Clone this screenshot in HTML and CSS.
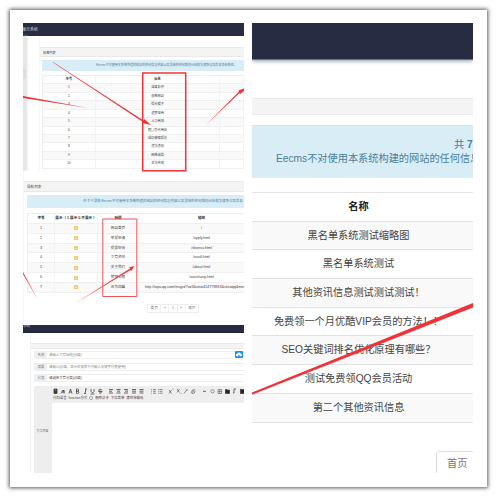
FILE: index.html
```
<!DOCTYPE html>
<html lang="en">
<head>
<meta charset="utf-8">
<title>Eecms</title>
<link rel="stylesheet" href="styles.css">
</head>
<body>
<main class="card">
  <div class="left">
    <section class="shot tags">
      <header class="nav">曝光系统</header>
      <div class="tags-body">
        <aside class="side"><i></i></aside>
        <div class="panel">
          <div class="bar">标签列表</div>
          <div class="alert">Eecms不对使用本系统构建的网站的任何信息内容以及导致的任何版权纠纷和法律争议及后果承担责任。</div>
          <div class="grid">
            <div class="row head"><span>序号</span><span>标签</span><span></span></div>
            <div class="row odd"><span>1</span><span>自媒易评</span><span></span></div>
            <div class="row"><span>2</span><span>收款网站</span><span></span></div>
            <div class="row odd"><span>3</span><span>曝光骗子</span><span></span></div>
            <div class="row"><span>4</span><span>追梦电商</span><span></span></div>
            <div class="row odd"><span>5</span><span>人马商城</span><span></span></div>
            <div class="row"><span>6</span><span>假冒伪劣商品</span><span></span></div>
            <div class="row odd"><span>7</span><span>成功被骗曝光</span><span></span></div>
            <div class="row"><span>8</span><span>违法违规</span><span></span></div>
            <div class="row odd"><span>9</span><span>网络诚信</span><span></span></div>
            <div class="row"><span>10</span><span>非法传销</span><span></span></div>
          </div>
        </div>
      </div>
    </section>
    <section class="shot links">
      <div class="bar">导航列表</div>
      <div class="alert">共 <b>7</b> 个导航 Eecms不对使用本系统构建的网站的任何信息内容以及导致的任何版权纠纷和法律争议及后果</div>
      <div class="grid">
        <div class="row head"><span>序号</span><span>展示（ 1.展示 0.不展示 ）</span><span>标题</span><span>链接</span></div>
        <div class="row odd"><span>1</span><span><i>是</i></span><span>网站首页</span><span>/</span></div>
        <div class="row"><span>2</span><span><i>是</i></span><span>举报申请</span><span>/apply.html</span></div>
        <div class="row odd"><span>3</span><span><i>是</i></span><span>提报申诉</span><span>/shensu.html</span></div>
        <div class="row"><span>4</span><span><i>是</i></span><span>文章资讯</span><span>/wzall.html</span></div>
        <div class="row odd"><span>5</span><span><i>是</i></span><span>关于我们</span><span>/about.html</span></div>
        <div class="row"><span>6</span><span><i>是</i></span><span>赞赏上榜</span><span>/zanshang.html</span></div>
        <div class="row odd"><span>7</span><span><i>是</i></span><span>合作加盟</span><span class="url">http://wpa.qq.com/msgrd?v=3&amp;uin=414779833&amp;site=qq&amp;men</span></div>
      </div>
      <div class="pager"><span class="wide">首页</span><span>«</span><span>1</span><span>»</span><span class="wide">尾页</span></div>
    </section>
    <section class="shot editor">
      <header class="nav">系统</header>
      <div class="form">
        <div class="bar"></div>
        <div class="field"><label>名称</label><span>请输入文章标题[必填]</span>
          <svg class="cloud" viewBox="0 0 16 14"><rect width="16" height="14" rx="2" fill="#1890ff"/><path d="M4 10.500a2.200 2.200 0 0 1 0-4.400 4 4 0 0 1 7.500-1A2.800 2.800 0 0 1 12 10.500H9.300V8H6.700v2.500z" fill="#fff"/></svg>
        </div>
        <div class="field"><label>摘要</label><span>请输入[必填，显示在搜索中可输入关键字代替使用]</span></div>
        <div class="field"><label>分类</label><span class="dark">请选择文章分类[必填]</span></div>
        <div class="rich">
          <label>文章内容</label>
          <div class="area">
            <div class="tools">
              <svg viewBox="0 0 192 9" class="icons" fill="none" stroke="#444" stroke-width=".8">
                <path d="M2 2h3v4.500H2zM3 2v2h1V2" fill="#333"/>
                <path d="M9 5h4M10 3.500h2v3M9 6.500l3-3"/>
                <path d="M17 6.500l1.500-4.500 1.500 4.500M17.500 5h2M24.500 2v4.500h1.200a1 1 0 0 0 0-2.200h-1.200 1a1 1 0 0 0 0-2.300z"/>
                <path d="M33 2h2M34 2l-1 4.500M32 6.500h2M39 2v2.500q1.500 3 3 0V2M38.500 7h4M49.500 2.500q-3-1-2.500 1t2.500 1q0 2.500-2.500 1.500M46 4.300h4.500"/>
                <path d="M57 2.500h4M57 4.200h3M57 6h4M64.500 2.500h4M65 4.200h3M64.500 6h4M72 2.500h4M73 4.200h3M72 6h4M80 2.500h4M80 4.200h4M80 6h4M87.500 2.500h4M87.500 4.200h4M87.500 6h4"/>
                <path d="M99 2.500h.8M101 2.500h3M99 4.300h.8M101 4.300h3M99 6.200h.8M101 6.200h3M106 2.500h.8M107.500 2.500h3M106 4.300h.8M107.500 4.300h3M106 6.200h.8M107.500 6.200h3" stroke-width=".6"/>
                <path d="M117 3l2.500 3.500M119.500 3 117 6.500M120.500 2h1M125 2l2.500 3.500M127.500 2 125 5.500M128.500 6.500h1M132 6.500l3.500-4.500M134 2.500l1 1M139 6.500l4-4M139.500 5.500q0-3 3-3M143 4q0 3-3 2.500" stroke-width=".6"/>
                <path d="M151 4.300h3"/><circle cx="160.500" cy="4.300" r="1.700" stroke-width=".5"/><path d="M166 2.500h3.500v4H166zM166 4.500h3.500M167.700 2.500v4" stroke-width=".5"/><path d="M173.500 2.500h1.500l.5.600h2v3.400h-4z" fill="#222"/><path d="M182 2h2M182 2v4h-1"/><rect x="188.500" y="2.500" width="3.500" height="4" fill="#222"/>
              </svg>
              <div class="words"><span>代码语言</span><span>function方式</span><svg class="ring" viewBox="0 0 4 4"><circle cx="2" cy="2" r="1.600" fill="none" stroke="#666" stroke-width=".5"/></svg><span>删除命令</span><span>下拉菜单</span><span>清空草稿纸</span></div>
            </div>
          </div>
        </div>
      </div>
    </section>
  </div>
  <section class="shot right">
    <header class="nav"></header>
    <div class="bar"></div>
    <div class="alert"><div class="count">共 <b>7</b></div><div class="notice">Eecms不对使用本系统构建的网站的任何信息</div></div>
    <div class="list">
      <div class="item head">名称</div>
      <div class="item odd">黑名单系统测试缩略图</div>
      <div class="item">黑名单系统测试</div>
      <div class="item odd">其他资讯信息测试测试测试！</div>
      <div class="item">免费领一个月优酷VIP会员的方法！！</div>
      <div class="item odd">SEO关键词排名优化原理有哪些？</div>
      <div class="item">测试免费领QQ会员活动</div>
      <div class="item odd">第二个其他资讯信息</div>
    </div>
    <div class="first">首页</div>
  </section>
</main>
<svg class="marks" viewBox="0 0 497 497" fill="#ee3438">
  <path d="M142.700 73h43v97.700h-43z" fill="none" stroke="#ee3438" stroke-width="1.500"/>
  <path d="M53 62 143.500 120.500l.8-1.500 6.700 6-8.500-2 .5-1L53 62.500z"/>
  <path d="M23 96 88 108 23 98z"/>
  <path d="M206 125l33-33.500-.5-1L244 88.500v2.500l-4 3-.5-1z"/>
  <path d="M102.800 219h34v77.500h-34z" fill="none" stroke="#ee5558" stroke-width="1"/>
  <path d="M75 303.500l55-35-.8-1.300L134.500 266l-3.300 5-.7-1z"/>
  <path d="M23 272l15 28-15-26z"/>
  <path d="M252 392.500 473 303v4.500L252 394.700z"/>
</svg>
</body>
</html>
```
FILE: styles.css
```
* { box-sizing: border-box; }
body {
  margin: 0;
  width: 497px;
  height: 497px;
  overflow: hidden;
  padding: 10px;
  background: #fff;
  color: #444;
  font-family: "Liberation Sans", "Noto Sans CJK SC", sans-serif;
}
.card {
  width: 477px;
  height: 477px;
  padding: 13px;
  display: flex;
  gap: 8px;
  background: #fff;
  box-shadow: 0 0 4px 1px rgba(0, 0, 0, .65);
}
.left { width: 221px; display: flex; flex-direction: column; }
.shot { width: 221px; overflow: hidden; white-space: nowrap; flex: none; }
.nav { background: #272c42; color: #c4c6ce; }
.bar { background: #f4f4f4; border: 0 solid #e9e9e9; border-width: .5px 0; }
.alert { background: #d9edf7; color: #4b8097; text-align: center; }
.row { display: grid; text-align: center; border-bottom: 1px solid #f0f0f0; }
.row span { min-width: 0; border-right: 1px solid #f3f3f3; }
.odd { background: #f9f9f9; }
.head { font-weight: bold; color: #333; }

.tags { height: 148px; font-size: 3.2px; }
.tags .nav { height: 13px; font-size: 4px; line-height: 13px; text-indent: -1px; }
.tags-body { display: flex; }
.side { width: 3px; height: 135px; background: #e6e6e6; margin-right: 13px; padding-top: 33px; box-shadow: 1px 0 3px #ddd; }
.side i { display: block; height: 10px; background: #dcdcdc; }
.panel { width: 205px; padding-top: 11px; border-left: 1px solid #f7f7f7; }
.tags .bar { height: 10px; line-height: 10px; padding-left: 3px; }
.tags .alert { height: 11px; line-height: 11px; margin: 3px 0 4px 2px; font-size: 3.05px; padding-left: 47px; }
.tags .grid { margin-left: 2px; border-left: 1px solid #eee; border-top: 1px solid #eee; }
.tags .row { grid-template-columns: 53px 124px 24px; height: 8.43px; line-height: 7.6px; }

.links { height: 154px; padding-top: 10px; border-left: 1px solid #f9f9f9; font-size: 3.6px; }
.links .bar { height: 11px; line-height: 10px; padding-left: 3px; }
.links .alert { height: 13px; line-height: 12px; margin: 3px 0 5px 3px; padding-left: 56px; text-align: left; font-size: 3.45px; }
.links .grid { margin-left: 3px; border-left: 1px solid #eee; border-top: 1px solid #eee; }
.links .row { grid-template-columns: 27px 43px 41px 126px; height: 9.85px; line-height: 9.6px; }
.links .row i { font-style: normal; color: #fff; background: #f2bd4f; border-radius: 1px; font-size: 2.5px; padding: .5px; }
.links .row .url { text-align: left; padding-left: 6px; font-size: 3.7px; }
.pager { display: flex; width: 52px; height: 9px; margin: 11px 0 0 123px; border: 1px solid #eee; line-height: 7px; text-align: center; color: #777; }
.pager span { flex: 8; border-right: 1px solid #eee; }
.pager .wide { flex: 14; }
.pager span:last-child { border: 0; }

.editor { height: 148px; font-size: 3.4px; }
.editor .nav { height: 8px; line-height: 3px; font-size: 3.5px; border-bottom: 1px solid #1e2438; }
.form { margin-left: 7px; padding-top: 10px; border-left: 1px solid #f3f3f3; display: flex; flex-direction: column; }
.editor .bar { height: 6px; margin-bottom: 2px; }
.field { margin: 0 0 3.700px 3px; height: 8px; display: flex; align-items: center; border: 1px solid #eee; border-right: 0; line-height: 6px; color: #888; }
.field label { width: 12px; text-align: center; background: #f0f0f0; color: #777; margin-right: 2px; }
.field .dark { color: #444; }
.cloud { width: 8px; height: 7px; margin: -2px 1px 0 auto; }
.rich { margin-left: 3px; display: flex; height: 89px; }
.rich label { width: 18px; background: #eee; color: #666; display: flex; align-items: center; justify-content: center; padding-bottom: 0; font-size: 3px; }
.area { flex: 1; border: 1px solid #ededed; border-right: 0; }
.tools { height: 16px; background: #eee; }
.icons { display: block; width: 192px; height: 9px; }
.words { display: flex; gap: 2px; line-height: 4px; padding-left: 1px; }
.ring { width: 4px; height: 4px; }

.right { height: 450px; font-size: 10.2px; display: flex; flex-direction: column; }
.right .nav { height: 37px; flex: none; border-bottom: 1px solid #65728a; box-shadow: 0 1px 4px #8a969b; }
.right .bar { height: 17px; margin: 38px 0 10px; border-width: 1px 0; flex: none; }
.right .alert { height: 53px; flex: none; border-top: 1px solid #cfe6ee; padding-top: 12px; line-height: 14px; text-align: left; }
.right .count { padding-left: 202px; }
.notice { padding-left: 24px; }
.list { margin-top: 14px; border-top: 1px solid #e5e5e5; }
.item { height: 28.7px; line-height: 27px; padding-right: 8px; text-align: center; border-bottom: 1px solid #e2e2e2; }
.right .head { color: #222; }
.first { width: 40px; height: 24px; margin: 28px 0 0 184px; padding-left: 10px; line-height: 23px; border: 1px solid #ddd; border-radius: 3px 0 0 0; color: #777; flex: none; }

.marks { position: absolute; left: 0; top: 0; width: 497px; height: 497px; }
```
